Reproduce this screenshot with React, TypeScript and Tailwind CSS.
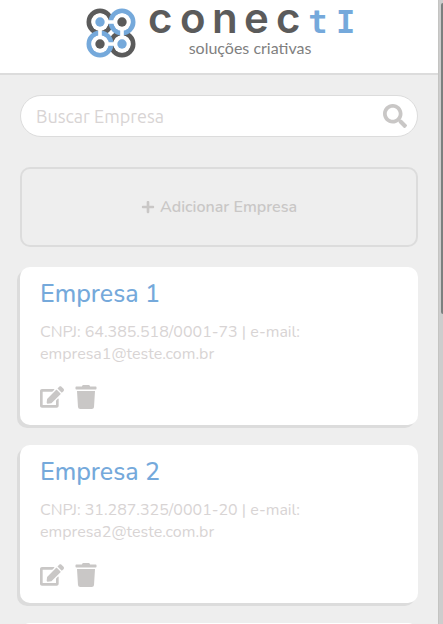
import { FaEdit, FaPlus, FaSearch, FaTrash } from "react-icons/fa";

const companies = [
  { name: "Empresa 1", cnpj: "64.385.518/0001-73", email: "empresa1@teste.com.br" },
  { name: "Empresa 2", cnpj: "31.287.325/0001-20", email: "empresa2@teste.com.br" },
  { name: "Empresa 3", cnpj: "45.102.846/0001-09", email: "empresa3@teste.com.br" },
];

const rings = [
  { x: 14, y: 14, ring: "#5b5b5b", dot: "#75a9db" },
  { x: 36, y: 36, ring: "#5b5b5b", dot: "#75a9db" },
  { x: 36, y: 14, ring: "#75a9db", dot: "#5b5b5b" },
  { x: 14, y: 36, ring: "#75a9db", dot: "#5b5b5b" },
];

function LogoMark() {
  return (
    <svg width="50" height="50" viewBox="0 0 50 50" aria-hidden="true">
      {rings.map((r) => (
        <circle key={`${r.x}-${r.y}`} cx={r.x} cy={r.y} r="11" fill="none" stroke={r.ring} strokeWidth="5" />
      ))}
      {rings.map((r) => (
        <circle key={`${r.x}-${r.y}`} cx={r.x} cy={r.y} r="8.7" fill="#fff" />
      ))}
      <path d="M14 14H36V36H14Z" fill="none" stroke="#fff" strokeWidth="3.6" />
      {rings.map((r) => (
        <circle key={`${r.x}-${r.y}`} cx={r.x} cy={r.y} r="4.7" fill={r.dot} />
      ))}
    </svg>
  );
}

function Header() {
  return (
    <header className="flex justify-center gap-3 border-b-2 border-[#dcdcdc] bg-white pt-2 pb-[13px]">
      <LogoMark />
      <div className="flex flex-col items-center">
        <div className="flex h-7 items-baseline gap-2 text-center font-[Inter,sans-serif] text-[42px] leading-5 font-semibold text-[#5b5b5b]">
          <span className="w-6">c</span>
          <span className="w-6">o</span>
          <span className="w-6">n</span>
          <span className="w-6">e</span>
          <span className="w-6">c</span>
          <span className="w-5 font-['DejaVu_Sans_Mono',monospace] text-[32px] font-bold text-[#75a9db]">t</span>
          <span className="w-4 font-['DejaVu_Sans_Mono',monospace] text-[32px] font-bold text-[#75a9db]">I</span>
        </div>
        <p className="font-[Lato,sans-serif] text-base leading-6 text-[#808080]">soluções criativas</p>
      </div>
    </header>
  );
}

function CompanyCard({ name, cnpj, email }: { name: string; cnpj: string; email: string }) {
  return (
    <li className="rounded-[10px] bg-white px-5 pt-2.5 pb-4 shadow-[-3px_3px_0_#dcdcdc]">
      <h2 className="text-[25px] leading-[34px] font-medium text-[#75a9db]">{name}</h2>
      <p className="mt-2.5 text-base leading-[22px] text-[#d8d4d4]">
        CNPJ: {cnpj} | e-mail: {email}
      </p>
      <div className="mt-5 flex gap-2.5 text-[#c9c7c6]">
        <button type="button" aria-label={`Editar ${name}`}>
          <FaEdit size={24} />
        </button>
        <button type="button" aria-label={`Excluir ${name}`}>
          <FaTrash size={24} />
        </button>
      </div>
    </li>
  );
}

export default function App() {
  return (
    <div className="flex h-screen overflow-hidden bg-[#eee] font-[Nunito,'Open_Sans',sans-serif]">
      <div className="min-w-0 flex-1">
        <Header />
        <main className="p-5">
          <form className="flex h-[42px] items-center rounded-full border border-[#dcdcdc] bg-white pr-2.5 pl-[15px]">
            <input
              type="text"
              aria-label="Buscar Empresa"
              placeholder="Buscar Empresa"
              className="min-w-0 flex-1 font-[Ubuntu,'Noto_Sans',sans-serif] text-lg outline-none placeholder:text-[#d8d4d4]"
            />
            <button type="button" aria-label="Buscar" className="text-[#c9c7c6]">
              <FaSearch size={24} />
            </button>
          </form>
          <button
            type="button"
            className="mt-[30px] flex h-20 w-full items-center justify-center gap-[5px] rounded-[10px] border-2 border-[#dcdcdc] text-base font-semibold text-[#c9c7c6]"
          >
            <FaPlus size={14} />
            Adicionar Empresa
          </button>
          <ul className="mt-5 flex flex-col gap-5">
            {companies.map((company) => (
              <CompanyCard key={company.name} {...company} />
            ))}
          </ul>
        </main>
      </div>
      <div className="w-[5px] border-l border-[#c4c4c2] bg-[#cdcdcd] pt-[3px] pl-0.5" aria-hidden="true">
        <div className="h-1/2 rounded-l-sm bg-[#7b807f]" />
      </div>
    </div>
  );
}
